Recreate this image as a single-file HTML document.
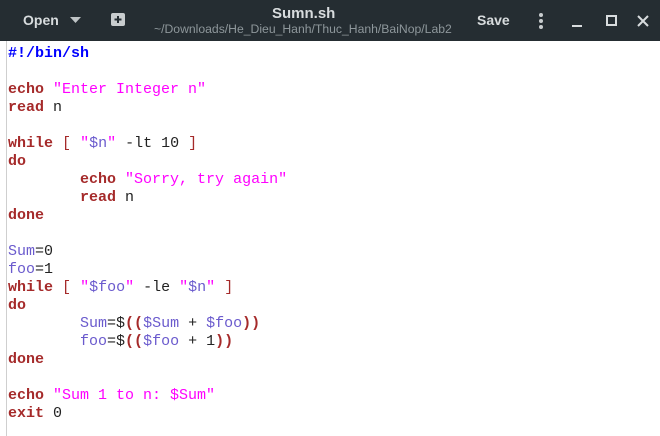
<!DOCTYPE html>
<html><head><meta charset="utf-8"><style>
body{margin:0;width:660px;height:436px;overflow:hidden;background:#fff;font-family:"Liberation Sans",sans-serif}
.hd{position:absolute;left:0;top:0;width:660px;height:41px;background:#252d32;color:#d8dcde}
.hd span{position:absolute;font-weight:bold;font-size:14px}
.ed{position:absolute;left:8px;top:45px;font-family:"Liberation Mono",monospace;font-size:15px;line-height:18px;white-space:pre;color:#222}
.bar{position:absolute;left:6px;top:41px;width:1px;height:395px;background:#cfcfcf}
.k{color:#a52a2a;font-weight:bold}.b{color:#a52a2a}.s{color:#f0f}.v{color:#6a5acd}.sh{color:#00f;font-weight:bold}
</style></head><body>
<div class="hd">
<span style="left:23px;top:12px">Open</span>
<svg style="position:absolute;left:70px;top:17px" width="12" height="7"><path d="M0 0h11L5.5 6z" fill="#bfc4c6"/></svg>
<svg style="position:absolute;left:111px;top:13px" width="14" height="13"><rect x="0" y="0" width="14" height="13" rx="2" fill="#c8ccce"/><path d="M7 3v7M3.5 6.5h7" stroke="#252d32" stroke-width="2"/></svg>
<span style="left:272px;top:5px;font-size:15px">Sumn.sh</span>
<span style="left:154px;top:22px;font-weight:normal;font-size:12.2px;color:#8e979b">~/Downloads/He_Dieu_Hanh/Thuc_Hanh/BaiNop/Lab2</span>
<span style="left:477px;top:12px">Save</span>
<svg style="position:absolute;left:538px;top:12px" width="6" height="18"><circle cx="3" cy="3" r="2" fill="#c8ccce"/><circle cx="3" cy="9" r="2" fill="#c8ccce"/><circle cx="3" cy="15" r="2" fill="#c8ccce"/></svg>
<svg style="position:absolute;left:570px;top:14px" width="80" height="14"><path d="M2 12h10" stroke="#d8dcde" stroke-width="2"/><rect x="37" y="2" width="9" height="9" fill="none" stroke="#d8dcde" stroke-width="2"/><path d="M68 2l10 10M78 2l-10 10" stroke="#d8dcde" stroke-width="2"/></svg>
</div>
<div class="bar"></div>
<div class="ed"><span class="sh">#!/bin/sh</span>

<span class="k">echo</span> <span class="s">"Enter Integer n"</span>
<span class="k">read</span> n

<span class="k">while</span> <span class="b">[</span> <span class="s">"</span><span class="v">$n</span><span class="s">"</span> -lt 10 <span class="b">]</span>
<span class="k">do</span>
        <span class="k">echo</span> <span class="s">"Sorry, try again"</span>
        <span class="k">read</span> n
<span class="k">done</span>

<span class="v">Sum</span>=0
<span class="v">foo</span>=1
<span class="k">while</span> <span class="b">[</span> <span class="s">"</span><span class="v">$foo</span><span class="s">"</span> -le <span class="s">"</span><span class="v">$n</span><span class="s">"</span> <span class="b">]</span>
<span class="k">do</span>
        <span class="v">Sum</span>=$<span class="k">((</span><span class="v">$Sum</span> + <span class="v">$foo</span><span class="k">))</span>
        <span class="v">foo</span>=$<span class="k">((</span><span class="v">$foo</span> + 1<span class="k">))</span>
<span class="k">done</span>

<span class="k">echo</span> <span class="s">"Sum 1 to n: $Sum"</span>
<span class="k">exit</span> 0</div>
</body></html>
